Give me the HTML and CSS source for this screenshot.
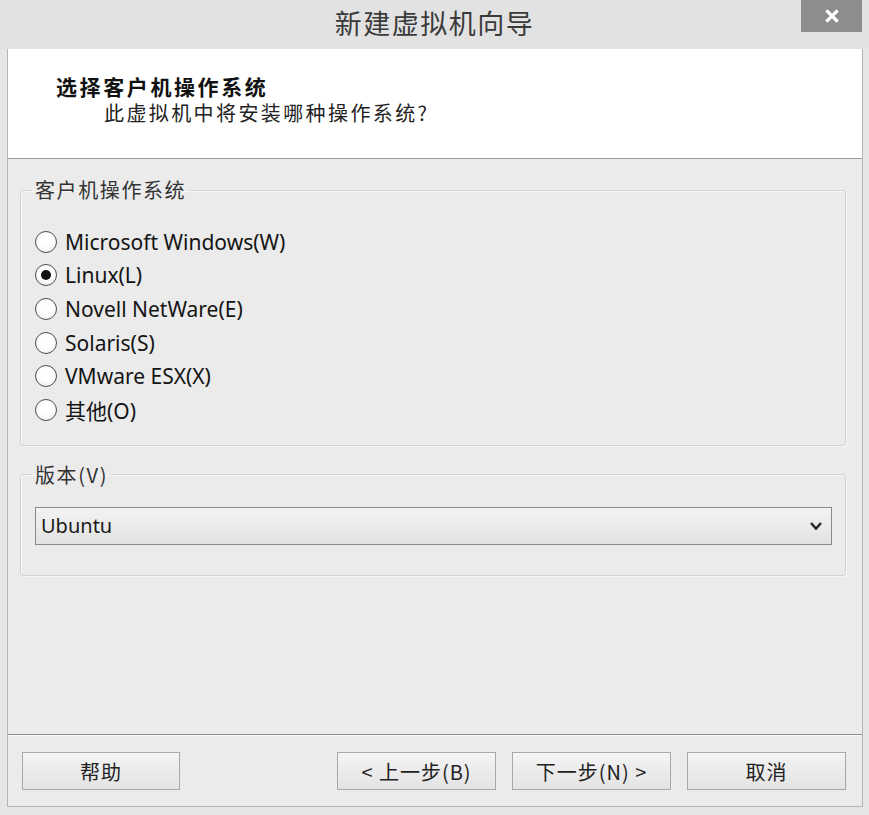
FILE: index.html
```html
<!DOCTYPE html>
<html lang="zh-CN">
<head>
<meta charset="utf-8">
<title>新建虚拟机向导</title>
<link rel="stylesheet" href="styles.css">
</head>
<body>
<div class="window">
  <div class="titlebar">
    <div class="title">新建虚拟机向导</div>
    <div class="close">
      <svg width="16" height="16" viewBox="0 0 16 16"><path d="M3.5 3.5 L12.5 12.5 M12.5 3.5 L3.5 12.5" stroke="#fff" stroke-width="3.2" stroke-linecap="square"/></svg>
    </div>
  </div>
  <div class="client">
    <div class="header">
      <div class="h-title">选择客户机操作系统</div>
      <div class="h-sub">此虚拟机中将安装哪种操作系统?</div>
    </div>
    <div class="body">
      <fieldset class="group os">
        <legend>客户机操作系统</legend>
        <div class="radio"><span class="dot"></span><span>Microsoft Windows(W)</span></div>
        <div class="radio"><span class="dot on"></span><span>Linux(L)</span></div>
        <div class="radio"><span class="dot"></span><span>Novell NetWare(E)</span></div>
        <div class="radio"><span class="dot"></span><span>Solaris(S)</span></div>
        <div class="radio"><span class="dot"></span><span>VMware ESX(X)</span></div>
        <div class="radio"><span class="dot"></span><span>其他(O)</span></div>
      </fieldset>
      <fieldset class="group ver">
        <legend>版本(V)</legend>
        <div class="select">
          <span>Ubuntu</span>
          <svg width="14" height="10" viewBox="0 0 14 10"><path d="M2 2 L7 7.5 L12 2" fill="none" stroke="#2a2a2a" stroke-width="2.6"/></svg>
        </div>
      </fieldset>
    </div>
    <div class="footer">
      <div class="btn help">帮助</div>
      <div class="btn">&lt; 上一步(B)</div>
      <div class="btn">下一步(N) &gt;</div>
      <div class="btn">取消</div>
    </div>
  </div>
</div>
</body>
</html>
```

FILE: styles.css
```css
* { box-sizing: border-box; }
html, body { margin: 0; padding: 0; }
body {
  width: 869px;
  height: 815px;
  overflow: hidden;
  background: #e6e6e6;
  font-family: "Noto Sans", "Noto Sans CJK SC", sans-serif;
  color: #1e1e1e;
}
.window {
  height: 815px;
  display: flex;
  flex-direction: column;
  background: #e6e6e6;
}
.titlebar {
  height: 49px;
  flex: none;
  display: grid;
  grid-template-columns: 1fr auto 1fr;
  align-items: start;
  background: #e2e2e2;
}
.title {
  grid-column: 2;
  font-family: "Noto Sans CJK SC", sans-serif;
  font-size: 27px;
  line-height: 46px;
  letter-spacing: 1.5px;
  color: #3a3a3a;
}
.close {
  grid-column: 3;
  justify-self: end;
  width: 61px;
  height: 32px;
  margin-right: 7px;
  background: #8d8d8d;
  display: flex;
  align-items: center;
  justify-content: center;
}
.client {
  flex: 1;
  margin: 0 6px 8px 7px;
  border: 1px solid #b5b5b5;
  border-top: none;
  background: #ebebeb;
  display: flex;
  flex-direction: column;
}
.header {
  height: 110px;
  flex: none;
  background: #fff;
  border-bottom: 1px solid #9a9a9a;
  padding: 26px 0 0 48px;
  font-family: "Noto Sans CJK SC", sans-serif;
}
.h-title {
  font-size: 21px;
  line-height: 23px;
  font-weight: bold;
  letter-spacing: 2.6px;
  color: #111;
}
.h-sub {
  font-size: 20px;
  line-height: 23px;
  letter-spacing: 2.4px;
  margin: 3px 0 0 48px;
  color: #222;
}
.body {
  flex: 1;
  padding: 19px 16px 0 12px;
}
.group {
  margin: 0;
  border: 1px solid #d2d2d2;
  border-radius: 3px;
  box-shadow: inset 1px 1px 0 #f6f6f6, 1px 1px 0 #f6f6f6;
  min-width: 0;
}
.group legend {
  padding: 0 3px;
  margin-left: -3px;
  font-family: "Noto Sans CJK SC", sans-serif;
  font-size: 20px;
  line-height: 24px;
  letter-spacing: 1.6px;
  color: #333;
}
.os {
  padding: 23px 13px 18px 14px;
}
.ver {
  margin-top: 17px;
  padding: 20px 13px 30px 14px;
}
.radio {
  height: 33.6px;
  display: flex;
  align-items: center;
  gap: 8px;
  font-size: 21px;
  color: #141414;
}
.dot {
  width: 22px;
  height: 22px;
  flex: none;
  border-radius: 50%;
  border: 1.5px solid #4e4e4e;
  background: radial-gradient(circle at 50% 40%, #fff 40%, #ececec 100%);
  display: flex;
  align-items: center;
  justify-content: center;
}
.dot.on::after {
  content: "";
  width: 10px;
  height: 10px;
  border-radius: 50%;
  background: #111;
}
.select {
  height: 38px;
  border: 1px solid #8a8a8a;
  background: linear-gradient(#f3f3f3, #e2e2e2);
  display: flex;
  align-items: center;
  justify-content: space-between;
  padding: 0 8px 0 5px;
  font-size: 20px;
  color: #1a1a1a;
}
.footer {
  height: 72px;
  flex: none;
  border-top: 1px solid #8e8e8e;
  box-shadow: inset 0 1px 0 #f8f8f8;
  padding: 17px 16px 0 14px;
  display: flex;
  gap: 16px;
}
.btn {
  width: 159px;
  height: 38px;
  border: 1px solid #a8a8a8;
  background: linear-gradient(#f4f4f4, #e3e3e3);
  display: flex;
  align-items: center;
  justify-content: center;
  font-family: "Noto Sans CJK SC", sans-serif;
  font-size: 20px;
  letter-spacing: 1px;
  color: #222;
}
.help {
  width: 158px;
  margin-right: auto;
}
```
